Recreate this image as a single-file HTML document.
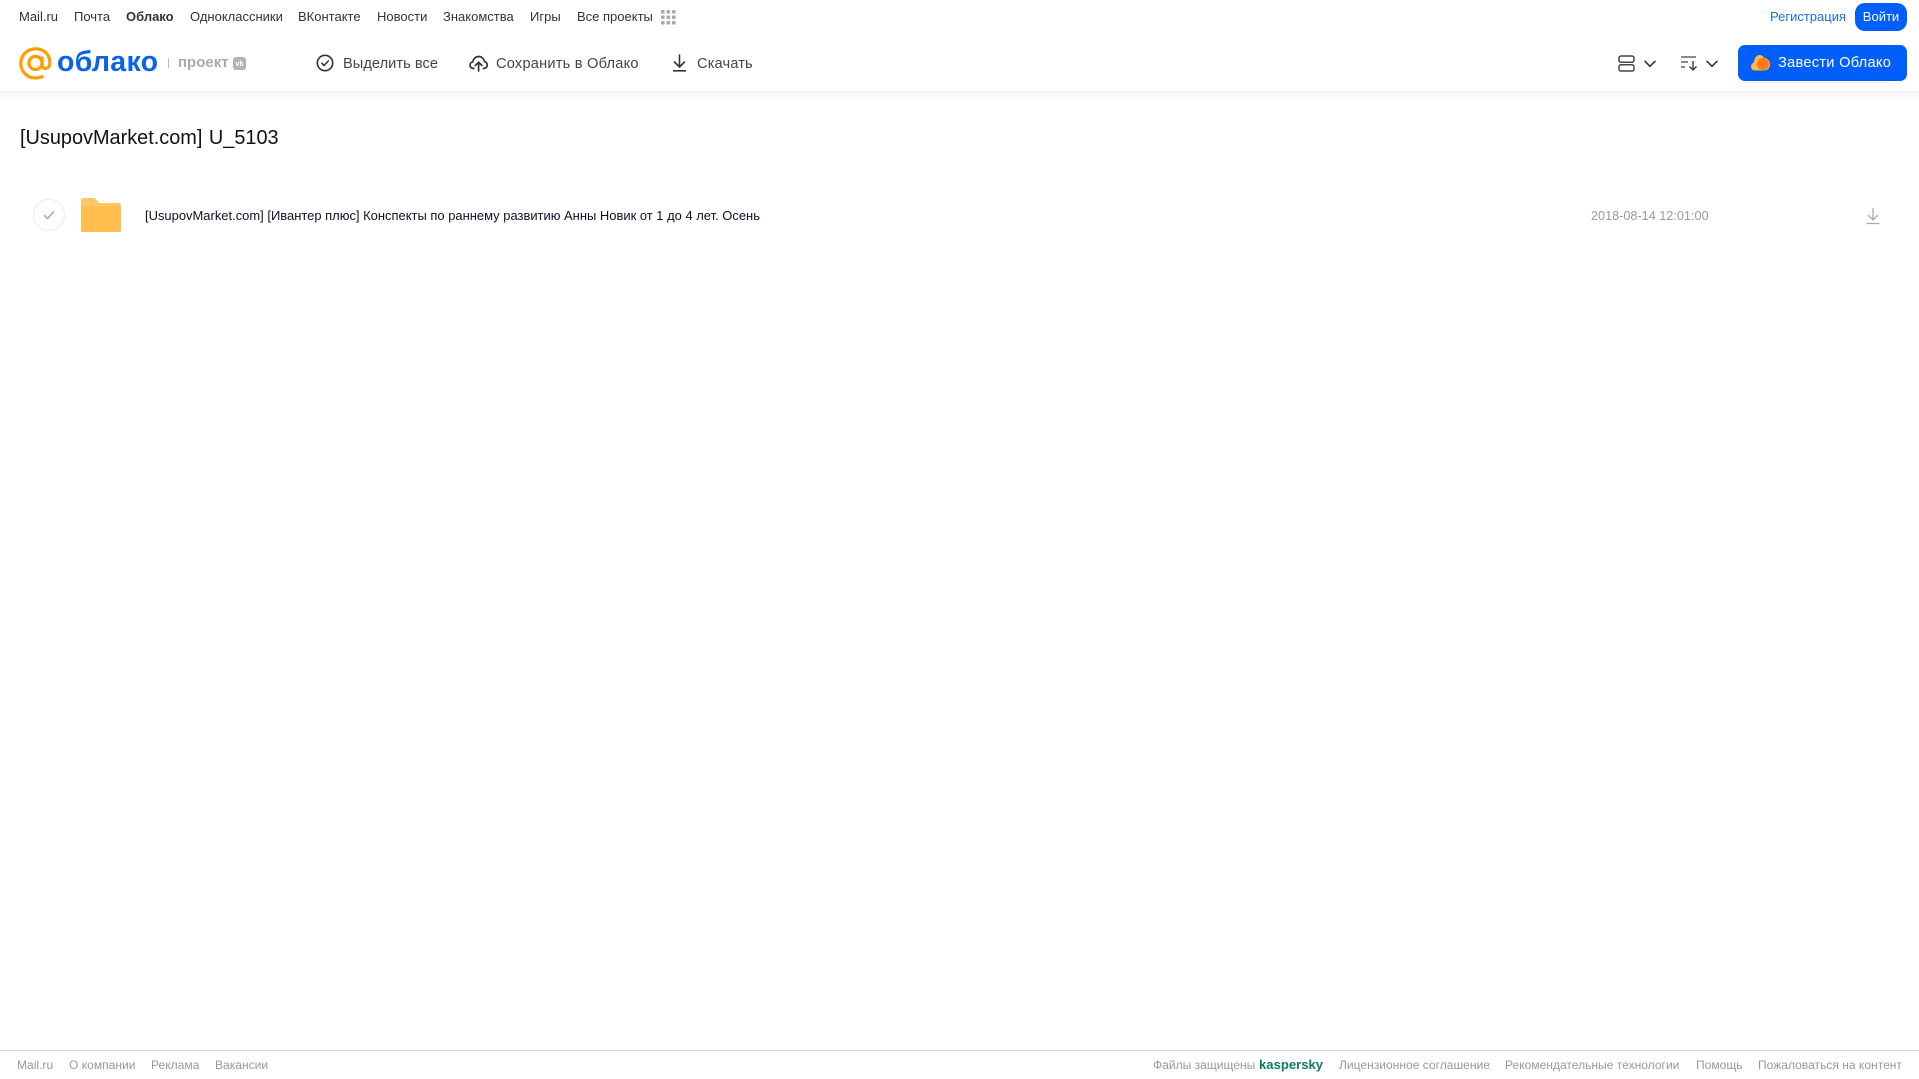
<!DOCTYPE html>
<html lang="ru">
<head>
<meta charset="utf-8">
<title>Облако</title>
<style>
html,body{margin:0;padding:0;background:#fff;}
body{width:1919px;height:1079px;position:relative;overflow:hidden;font-family:"Liberation Sans",Arial,sans-serif;}
.t{position:absolute;white-space:nowrap;line-height:20px;}
.n{top:7px;font-size:13px;color:#333;}
.b{top:54px;font-size:14.6px;color:#444;}
.f{top:1055px;font-size:12.05px;color:#999;}
svg{position:absolute;overflow:visible;}
</style>
</head>
<body>
<span class="t n" style="left:19px">Mail.ru</span>
<span class="t n" style="left:74px">Почта</span>
<span class="t n" style="left:126px;font-weight:bold">Облако</span>
<span class="t n" style="left:190px">Одноклассники</span>
<span class="t n" style="left:298px">ВКонтакте</span>
<span class="t n" style="left:377px">Новости</span>
<span class="t n" style="left:443px">Знакомства</span>
<span class="t n" style="left:530px">Игры</span>
<span class="t n" style="left:577px">Все проекты</span>
<svg style="left:661px;top:10px" width="15" height="15" fill="#aaa"><rect x="0" y="0" width="3.6" height="3.6" rx="1"/><rect x="5.5" y="0" width="3.6" height="3.6" rx="1"/><rect x="11" y="0" width="3.6" height="3.6" rx="1"/><rect x="0" y="5.5" width="3.6" height="3.6" rx="1"/><rect x="5.5" y="5.5" width="3.6" height="3.6" rx="1"/><rect x="11" y="5.5" width="3.6" height="3.6" rx="1"/><rect x="0" y="11" width="3.6" height="3.6" rx="1"/><rect x="5.5" y="11" width="3.6" height="3.6" rx="1"/><rect x="11" y="11" width="3.6" height="3.6" rx="1"/></svg>

<span class="t n" style="left:1770px;color:#1a6fd8">Регистрация</span>
<div style="position:absolute;left:1855px;top:3px;width:52px;height:28px;background:#005ff9;border-radius:10px;color:#fff;font-size:13px;line-height:28px;text-align:center;">Войти</div>

<div style="position:absolute;left:0;top:91px;width:1919px;height:1px;background:#f0f0f0"></div>
<div style="position:absolute;left:0;top:92px;width:1919px;height:8px;background:linear-gradient(#f6f6f6,#fff)"></div>

<svg style="left:19px;top:47px" width="33" height="33" viewBox="0 0 33 33" fill="none" stroke="#ff9e00" stroke-width="3.2"><circle cx="16.5" cy="16" r="6.6"/><path d="M23.1 9.5v8.7c0 4.6 7.3 4.6 7.7-1.6C31.400 7.500 24.900 1.800 16.500 1.800 8.300 1.800 1.800 8.300 1.800 16.300c0 8.200 6.500 14.700 14.700 14.700 3 0 5.500-.7 7.800-2.100"/></svg>
<span class="t" style="left:57px;top:47px;line-height:30px;font-size:28.5px;font-weight:bold;color:#0a63ea;letter-spacing:.3px;">облако</span>
<div style="position:absolute;left:168px;top:58px;width:1px;height:10px;background:#bbb"></div>
<span class="t" style="left:178px;top:53px;font-size:15px;font-weight:bold;color:#aaa">проект</span>
<div style="position:absolute;left:233px;top:57px;width:13px;height:13px;background:#b3b3b3;border-radius:3px;color:#fff;font-size:7.500px;line-height:13px;text-align:center;font-weight:bold">vk</div>

<svg style="left:316px;top:54px" width="18" height="18" viewBox="0 0 18 18" fill="none" stroke="#333" stroke-width="1.600"><circle cx="9" cy="9" r="7.700"/><path d="M5.800 9.200l2.300 2.300 4.200-4.500" stroke-linecap="round" stroke-linejoin="round"/></svg>
<span class="t b" style="left:343px;letter-spacing:.05px">Выделить все</span>
<svg style="left:469px;top:54px" width="19" height="18" viewBox="0 0 19 18" fill="none" stroke="#333" stroke-width="1.700"><path d="M5.500 14.500H4.500C2.500 14.500 1 13 1 11.200c0-1.600 1.100-3 2.700-3.300C4.300 5 6.600 2.500 9.700 2.500c3 0 5.200 2.200 5.800 5 1.600.4 2.700 1.900 2.700 3.600 0 1.900-1.500 3.400-3.500 3.400h-1" stroke-linejoin="round"/><path d="M9.600 17V8.500M6.300 11.500l3.300-3.300 3.300 3.300" stroke-linecap="round" stroke-linejoin="round"/></svg>
<span class="t b" style="left:496px;letter-spacing:.22px">Сохранить в Облако</span>
<svg style="left:672px;top:54px" width="15" height="18" viewBox="0 0 15 18" fill="none" stroke="#333" stroke-width="1.600"><path d="M7.500 1v11.500M2.500 8l5 5 5-5" stroke-linecap="round" stroke-linejoin="round"/><path d="M1 16.800h13"/></svg>
<span class="t b" style="left:697px;letter-spacing:.15px">Скачать</span>

<svg style="left:1618px;top:55px" width="17" height="17" viewBox="0 0 17 17" fill="none" stroke="#444" stroke-width="1.500"><rect x="1" y="1" width="15" height="6.300" rx="2"/><rect x="1" y="9.700" width="15" height="6.300" rx="2"/></svg>
<svg style="left:1644px;top:60px" width="12" height="8" viewBox="0 0 12 8" fill="none" stroke="#333" stroke-width="1.600"><path d="M1 1.300l5 5 5-5" stroke-linecap="round" stroke-linejoin="round"/></svg>
<svg style="left:1681px;top:55px" width="17" height="16" viewBox="0 0 17 16" fill="none" stroke="#444" stroke-width="1.300"><path d="M0 2h15M0 7h7M0 12h4"/><path d="M12 6v9M8.500 11.500l3.500 3.500 3.500-3.500" stroke-width="1.500"/></svg>
<svg style="left:1706px;top:60px" width="12" height="8" viewBox="0 0 12 8" fill="none" stroke="#333" stroke-width="1.600"><path d="M1 1.300l5 5 5-5" stroke-linecap="round" stroke-linejoin="round"/></svg>

<div style="position:absolute;left:1738px;top:45px;width:169px;height:36px;background:#005ff9;border-radius:7px"></div>
<svg style="left:1751px;top:54px" width="19" height="17" viewBox="0 0 19 17"><path d="M4 16.500C1.800 16.500 0 14.800 0 12.500c0-1.800 1.100-3.300 2.700-3.800C3.200 4.500 5.500 1 8.500 1c2 0 3.500 1 4.500 2.800C16.500 4.300 19 7 19 10.500c0 3.400-2.500 6-6 6z" fill="#ffb84d"/><circle cx="12" cy="10" r="6" fill="#ff7a1a"/></svg>
<span class="t" style="left:1778px;top:53px;font-size:14.600px;color:#fff;letter-spacing:.28px">Завести Облако</span>

<span class="t" style="left:20px;top:126px;line-height:24px;font-size:19.900px;word-spacing:1px;color:#111">[UsupovMarket.com] U_5103</span>

<svg style="left:33px;top:199px" width="32" height="32" viewBox="0 0 32 32" fill="none"><circle cx="16" cy="16" r="15.500" stroke="#ececec"/><path d="M11.500 16.500l3 3 6-6.500" stroke="#a5a5a5" stroke-width="1.500" stroke-linecap="round" stroke-linejoin="round"/></svg>
<svg style="left:81px;top:198px" width="40" height="34" viewBox="0 0 40 34"><path d="M2 0h10c2 0 3 1 4 2.500 1 1.500 2 2.500 4 2.500h18c1.100 0 2 .9 2 2v25c0 1.100-.9 2-2 2H2c-1.100 0-2-.9-2-2V2C0 .9.900 0 2 0z" fill="#ffc766"/><rect x="0" y="8" width="40" height="26" rx="2" fill="#ffbe4d"/></svg>
<span class="t" style="left:145px;top:206px;font-size:12.960px;color:#1a0a2a">[UsupovMarket.com] [Ивантер плюс] Конспекты по раннему развитию Анны Новик от 1 до 4 лет. Осень</span>
<span class="t" style="left:1591px;top:206px;font-size:12.660px;color:#999">2018-08-14 12:01:00</span>
<svg style="left:1866px;top:207px" width="14" height="18" viewBox="0 0 14 18" fill="none" stroke="#aaa" stroke-width="1.300"><path d="M7 1v11.500M2 8l5 5 5-5"/><path d="M.500 16.500h13"/></svg>

<div style="position:absolute;left:0;top:1050px;width:1919px;height:1px;background:#dcdcdc"></div>
<span class="t f" style="left:17px">Mail.ru</span>
<span class="t f" style="left:69px">О компании</span>
<span class="t f" style="left:151px">Реклама</span>
<span class="t f" style="left:215px">Вакансии</span>
<span class="t f" style="left:1153px">Файлы защищены</span>
<span class="t f" style="left:1259px;font-weight:bold;color:#0e7a6a;font-size:13.100px">kaspersky</span>
<span class="t f" style="left:1339px">Лицензионное соглашение</span>
<span class="t f" style="left:1505px">Рекомендательные технологии</span>
<span class="t f" style="left:1696px">Помощь</span>
<span class="t f" style="left:1758px">Пожаловаться на контент</span>
</body>
</html>
